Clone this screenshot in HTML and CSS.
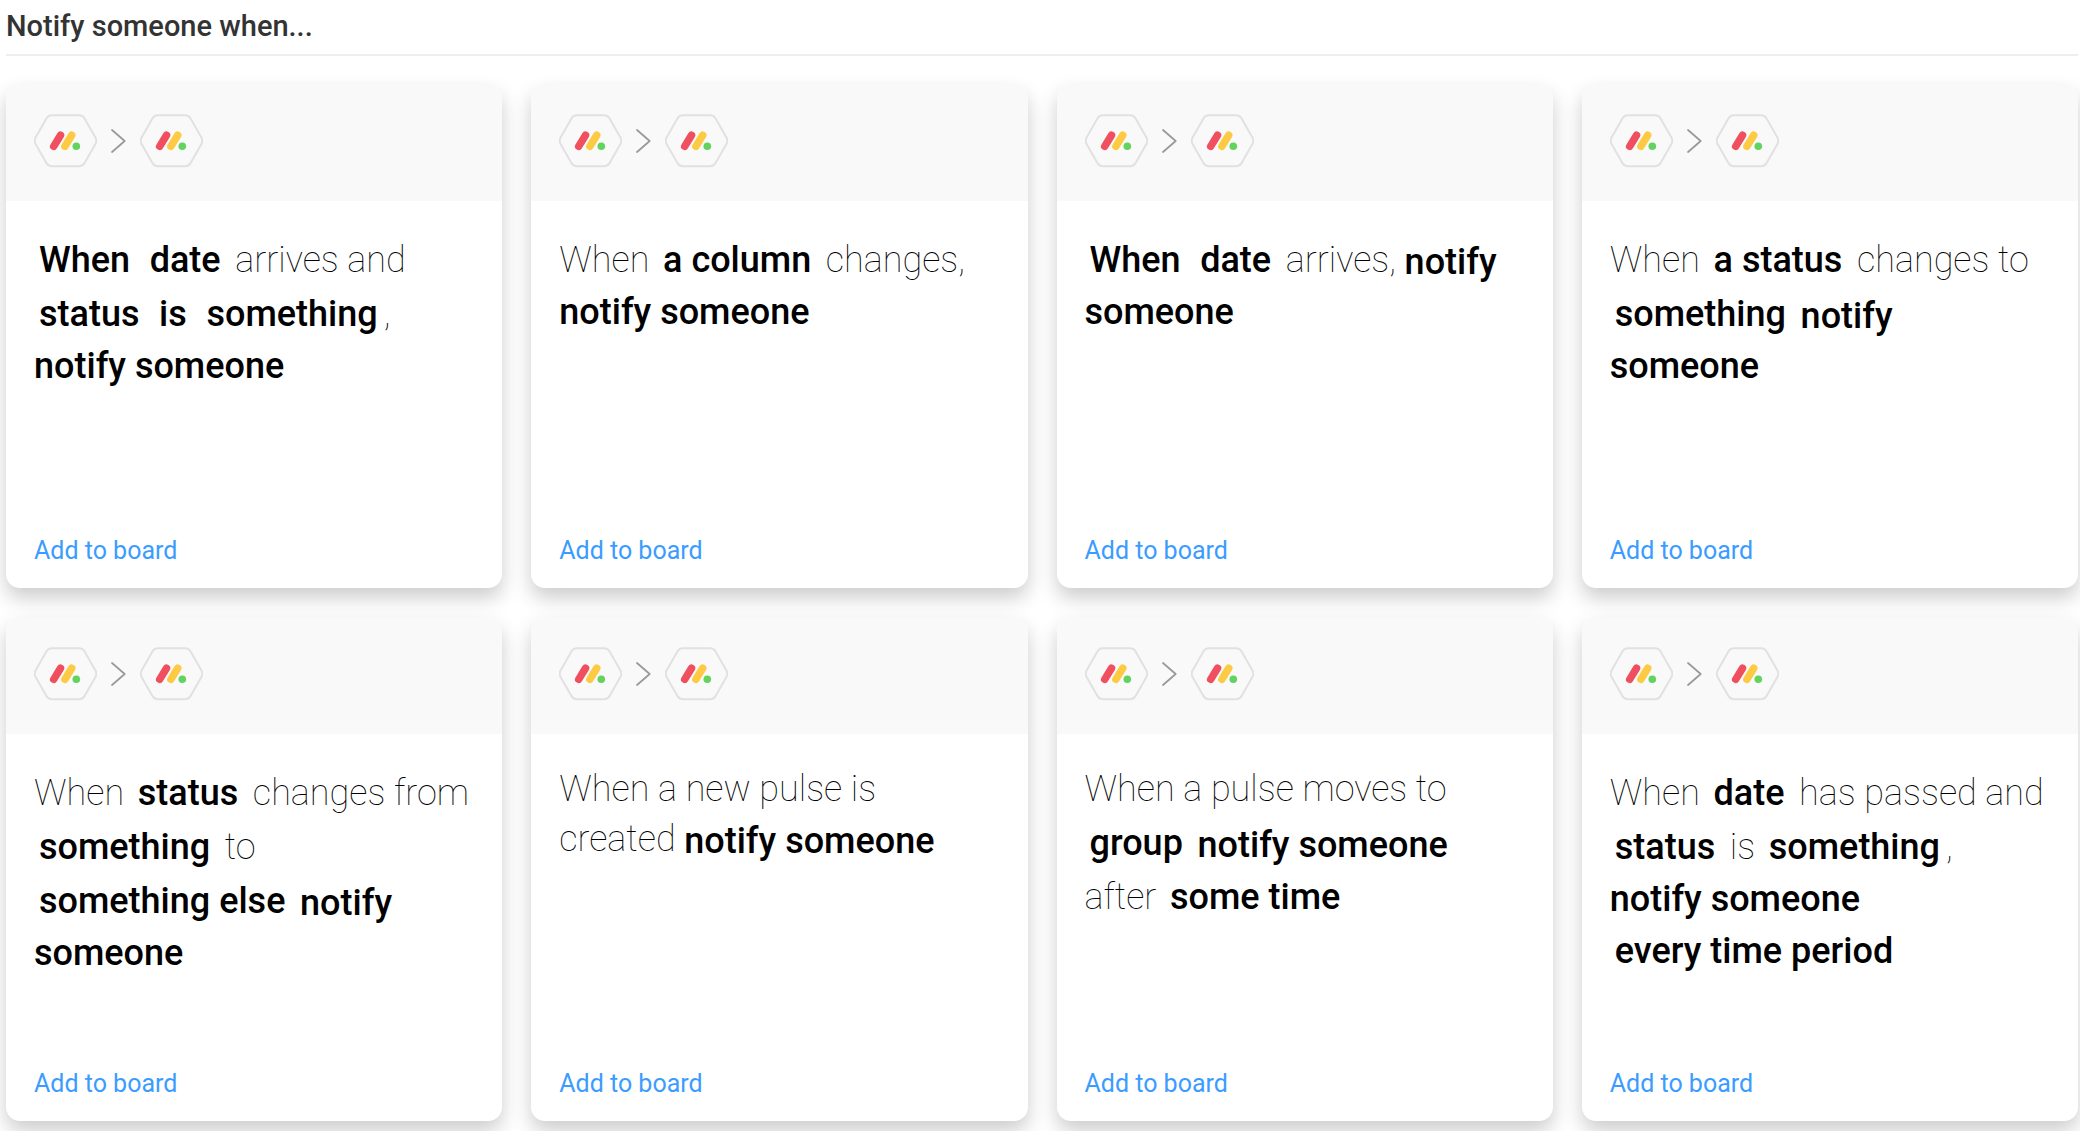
FILE: index.html
```
<!DOCTYPE html>
<html lang="en">
<head>
  <meta charset="UTF-8">
  <meta name="viewport" content="width=device-width, initial-scale=1.0">
  <title>Automations</title>
  <link rel="stylesheet" href="styles.css">
</head>
<body>
  <!-- Shared icons -->
  <svg class="icon-defs" aria-hidden="true">
    <symbol id="app" viewBox="0 0 63 54">
      <path d="M18 1.200h27q3.500 0 5.300 2.800l11 19.200q2 3.500 0 7l-11 19.200q-1.800 2.800-5.300 2.800h-27q-3.500 0-5.300-2.800l-11-19.200q-2-3.500 0-7l11-19.200q1.800-2.800 5.300-2.800z" fill="none" stroke="#e1e1e1" stroke-width="2"/>
      <path d="M19.700 32.400l6.800-11.200" stroke="#f04f5f" stroke-width="7.500" stroke-linecap="round"/>
      <path d="M30.900 32.400l6.800-11.200" stroke="#fccb43" stroke-width="7.500" stroke-linecap="round"/>
      <circle cx="42.300" cy="32.200" r="3.800" fill="#62d35c"/>
    </symbol>
    <symbol id="chevron" viewBox="0 0 15 26">
      <path d="M1 2l12.700 11l-12.700 11" fill="none" stroke="#999" stroke-width="1.700" stroke-linecap="round" stroke-linejoin="round"/>
    </symbol>
  </svg>

  <main class="section">
    <h2 class="section-title">Notify someone when...</h2>

    <div class="recipes">
      <article class="card">
        <div class="card-header">
          <svg class="app-icon"><use href="#app"/></svg>
          <svg class="chevron"><use href="#chevron"/></svg>
          <svg class="app-icon"><use href="#app"/></svg>
        </div>
        <p class="sentence"><span class="field">When</span> <span class="field">date</span> arrives and <span class="field">status</span> <span class="field">is</span> <span class="field">something</span>, <b class="action">notify someone</b></p>
        <a class="add-link" href="#">Add to board</a>
      </article>

      <article class="card">
        <div class="card-header">
          <svg class="app-icon"><use href="#app"/></svg>
          <svg class="chevron"><use href="#chevron"/></svg>
          <svg class="app-icon"><use href="#app"/></svg>
        </div>
        <p class="sentence">When <span class="field">a column</span> changes, <b class="action">notify someone</b></p>
        <a class="add-link" href="#">Add to board</a>
      </article>

      <article class="card">
        <div class="card-header">
          <svg class="app-icon"><use href="#app"/></svg>
          <svg class="chevron"><use href="#chevron"/></svg>
          <svg class="app-icon"><use href="#app"/></svg>
        </div>
        <p class="sentence"><span class="field">When</span> <span class="field">date</span> arrives, <b class="action">notify someone</b></p>
        <a class="add-link" href="#">Add to board</a>
      </article>

      <article class="card">
        <div class="card-header">
          <svg class="app-icon"><use href="#app"/></svg>
          <svg class="chevron"><use href="#chevron"/></svg>
          <svg class="app-icon"><use href="#app"/></svg>
        </div>
        <p class="sentence">When <span class="field">a status</span> changes to <span class="field">something</span> <b class="action">notify someone</b></p>
        <a class="add-link" href="#">Add to board</a>
      </article>

      <article class="card">
        <div class="card-header">
          <svg class="app-icon"><use href="#app"/></svg>
          <svg class="chevron"><use href="#chevron"/></svg>
          <svg class="app-icon"><use href="#app"/></svg>
        </div>
        <p class="sentence">When <span class="field">status</span> changes from <span class="field">something</span> to <span class="field">something else</span> <b class="action">notify someone</b></p>
        <a class="add-link" href="#">Add to board</a>
      </article>

      <article class="card">
        <div class="card-header">
          <svg class="app-icon"><use href="#app"/></svg>
          <svg class="chevron"><use href="#chevron"/></svg>
          <svg class="app-icon"><use href="#app"/></svg>
        </div>
        <p class="sentence">When a new pulse is created <b class="action">notify someone</b></p>
        <a class="add-link" href="#">Add to board</a>
      </article>

      <article class="card">
        <div class="card-header">
          <svg class="app-icon"><use href="#app"/></svg>
          <svg class="chevron"><use href="#chevron"/></svg>
          <svg class="app-icon"><use href="#app"/></svg>
        </div>
        <p class="sentence">When a pulse moves to <span class="field">group</span> <b class="action">notify someone</b> after <span class="field">some time</span></p>
        <a class="add-link" href="#">Add to board</a>
      </article>

      <article class="card">
        <div class="card-header">
          <svg class="app-icon"><use href="#app"/></svg>
          <svg class="chevron"><use href="#chevron"/></svg>
          <svg class="app-icon"><use href="#app"/></svg>
        </div>
        <p class="sentence">When <span class="field">date</span> has passed and <span class="field">status</span> is <span class="field">something</span>, <b class="action">notify someone</b> <span class="field">every time period</span></p>
        <a class="add-link" href="#">Add to board</a>
      </article>
    </div>
  </main>
</body>
</html>
```

FILE: styles.css
```
* {
  margin: 0;
  padding: 0;
  box-sizing: border-box;
}

body {
  font-family: Roboto, sans-serif;
  background: #fff;
  color: #000;
  overflow-x: hidden;
}

.icon-defs {
  display: none;
}

/* Section heading */
.section {
  padding: 8px 2px 10px 6px;
}

.section-title {
  height: 48px;
  line-height: 36px;
  font-size: 29px;
  font-weight: 500;
  color: #333;
  border-bottom: 2px solid #eee;
}

/* Recipe cards */
.recipes {
  display: grid;
  grid-template-columns: repeat(4, 1fr);
  gap: 29px;
  margin-top: 28px;
}

.card {
  display: flex;
  flex-direction: column;
  min-height: 504px;
  background: #fff;
  border-radius: 14px;
  box-shadow: 0 10px 20px rgba(0, 0, 0, 0.2);
}

.card-header {
  display: flex;
  align-items: center;
  height: 117px;
  padding: 0 28px 3px;
  background: #f9f9f9;
  border-radius: 14px 14px 0 0;
}

.app-icon {
  width: 63px;
  height: 54px;
}

.chevron {
  width: 15px;
  height: 26px;
  margin: 0 14px;
}

/* Sentence, thin text with bold fields */
.sentence {
  flex: 1;
  padding: 30px 30px 0 28px;
  font-size: 36px;
  font-weight: 100;
  line-height: 50px;
}

.field {
  display: inline-block;
  margin: 0 6px 0 5px;
  padding-top: 4px;
  font-weight: 500;
}

.action {
  font-weight: 500;
  line-height: 46px;
  vertical-align: -2px;
}

.add-link {
  align-self: flex-start;
  margin: 0 28px 21px;
  font-size: 25px;
  font-weight: 400;
  line-height: 32px;
  color: #3b9cff;
  text-decoration: none;
}
```
